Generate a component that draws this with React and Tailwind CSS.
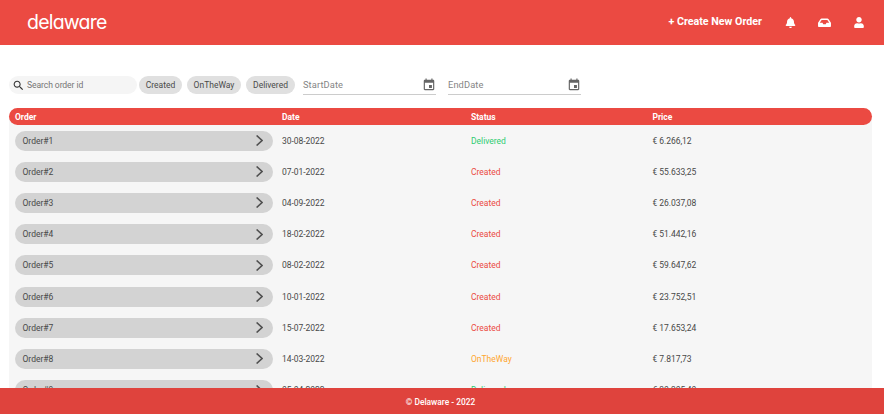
import React from "react";

const orders = [
  ["Order#1", "30-08-2022", "Delivered", "€ 6.266,12"],
  ["Order#2", "07-01-2022", "Created", "€ 55.633,25"],
  ["Order#3", "04-09-2022", "Created", "€ 26.037,08"],
  ["Order#4", "18-02-2022", "Created", "€ 51.442,16"],
  ["Order#5", "08-02-2022", "Created", "€ 59.647,62"],
  ["Order#6", "10-01-2022", "Created", "€ 23.752,51"],
  ["Order#7", "15-07-2022", "Created", "€ 17.653,24"],
  ["Order#8", "14-03-2022", "OnTheWay", "€ 7.817,73"],
  ["Order#9", "05-04-2022", "Delivered", "€ 30.305,40"],
];

const statusColor = {
  Delivered: "text-[#2ecc71]",
  Created: "text-[#eb4a42]",
  OnTheWay: "text-[#ffa630]",
};

function Chip({ children, className }) {
  return (
    <button className={`h-[18px] shrink-0 rounded-full bg-[#e0e0e0] text-center text-[8.5px] leading-[18px] text-[#4a4a4a] ${className}`}>
      {children}
    </button>
  );
}

function DateField({ label }) {
  return (
    <div className="flex h-[20px] w-[133px] items-center justify-between border-b border-[#cccccc] text-[#858585]">
      <span className="pt-px text-[9.3px] tracking-[0.1px]">{label}</span>
      <svg className="size-[14px]" viewBox="0 0 24 24" fill="#666666">
        <path d="M17 12h-5v5h5v-5zM16 1v2H8V1H6v2H5c-1.11 0-1.99.9-1.99 2L3 19c0 1.1.89 2 2 2h14c1.1 0 2-.9 2-2V5c0-1.1-.9-2-2-2h-1V1h-2zm3 18H5V8h14v11z" />
      </svg>
    </div>
  );
}

function Header() {
  return (
    <header className="flex h-[44.5px] shrink-0 items-center bg-[#eb4a42] pl-[27px] pr-[20px] text-white">
      <span className="pt-px font-['Inter',sans-serif] text-[19.5px] leading-none tracking-[-0.8px] [font-feature-settings:'cv11']">
        delaware
      </span>
      <span className="ml-auto text-[10.7px] font-bold">+ Create New Order</span>
      <svg className="ml-[22.5px] h-[11px] w-[11px]" viewBox="0 0 448 512" fill="currentColor">
        <path d="M224 512c35.320 0 63.970-28.650 63.970-64H160.030c0 35.350 28.650 64 63.970 64zm215.390-149.710c-19.320-20.760-55.470-51.990-55.470-154.290 0-77.700-54.480-139.900-127.940-155.160V32c0-17.670-14.320-32-31.980-32s-31.980 14.330-31.980 32v20.840C118.560 68.100 64.080 130.300 64.080 208c0 102.300-36.150 133.530-55.470 154.290-6 6.450-8.660 14.160-8.610 21.710.11 16.400 12.980 32 32.100 32h383.800c19.120 0 32-15.600 32.100-32 .05-7.550-2.610-15.270-8.610-21.710z" />
      </svg>
      <svg className="ml-[22.5px] h-[11.5px] w-[13px]" viewBox="0 0 576 512" fill="currentColor">
        <path d="M567.938 243.908L462.250 85.374A48.003 48.003 0 0 0 422.311 64H153.689a48 48 0 0 0-39.938 21.374L8.062 243.908A47.994 47.994 0 0 0 0 270.533V400c0 26.510 21.490 48 48 48h480c26.510 0 48-21.490 48-48V270.533a47.994 47.994 0 0 0-8.062-26.625zM162.252 128h251.497l85.333 128H376l-32 64H232l-32-64H76.918l85.334-128z" />
      </svg>
      <svg className="ml-[23px] h-[11px] w-[10px]" viewBox="0 0 448 512" fill="currentColor">
        <path d="M224 256c70.700 0 128-57.300 128-128S294.700 0 224 0 96 57.300 96 128s57.300 128 128 128zm89.600 32h-16.700c-22.200 10.200-46.900 16-72.900 16s-50.600-5.800-72.900-16h-16.700C60.200 288 0 348.200 0 422.400V464c0 26.500 21.500 48 48 48h352c26.500 0 48-21.500 48-48v-41.600c0-74.200-60.200-134.400-134.400-134.400z" />
      </svg>
    </header>
  );
}

export default function App() {
  return (
    <div className="flex h-screen flex-col overflow-hidden bg-white font-['Roboto',sans-serif]">
      <Header />
      <main className="min-h-0 flex-1 overflow-hidden pl-[9px] pr-[12px] pt-[28px]">
        <div className="flex h-[25px] items-center">
          <label className="flex h-[18px] w-[128px] items-center rounded-full bg-[#f5f5f5] pl-[3px]">
            <svg className="size-[13px]" viewBox="0 0 24 24" fill="#333333">
              <path d="M15.500 14h-.79l-.28-.27C15.410 12.590 16 11.110 16 9.500 16 5.910 13.090 3 9.500 3S3 5.910 3 9.500 5.910 16 9.500 16c1.610 0 3.090-.59 4.230-1.570l.27.28v.79l5 4.990L20.490 19l-4.990-5zm-6 0C7.010 14 5 11.990 5 9.500S7.010 5 9.500 5 14 7.010 14 9.500 11.990 14 9.500 14z" />
            </svg>
            <span className="ml-[2px] text-[8.6px] leading-[18px] tracking-[-0.1px] text-[#757575]">Search order id</span>
          </label>
          <Chip className="ml-[2px] w-[43px]">Created</Chip>
          <Chip className="ml-[5px] w-[54px]">OnTheWay</Chip>
          <Chip className="ml-[5px] mr-[8px] w-[49px]">Delivered</Chip>
          <DateField label="StartDate" />
          <div className="w-[12px]" />
          <DateField label="EndDate" />
        </div>
        <section className="mt-[10.5px] h-[400px] rounded-t-[9px] bg-[#f6f6f6] text-[8.5px] text-[#484848]">
          <div className="grid h-[17px] grid-cols-[267px_189px_181.500px_1fr] items-center rounded-full bg-[#eb4a42] pl-[6px] pt-px font-bold text-white">
            <span>Order</span>
            <span>Date</span>
            <span>Status</span>
            <span>Price</span>
          </div>
          {orders.map(([id, date, status, price]) => (
            <div key={id} className="grid h-[31.200px] grid-cols-[267px_189px_181.500px_1fr] items-center pl-[6px]">
              <div className="flex h-[20px] w-[258px] items-center justify-between rounded-full bg-[#d3d3d3] pl-[7.500px] pr-[10.500px]">
                <span className="pt-px">{id}</span>
                <svg className="h-[11px] w-[7px]" viewBox="0 0 7 11" fill="none" stroke="#505050" strokeWidth="1.600">
                  <path d="M.6.500 6 5.500.6 10.500" />
                </svg>
              </div>
              <span className="pt-px tracking-[-0.05px]">{date}</span>
              <span className={`pt-px ${statusColor[status]}`}>{status}</span>
              <span className="pt-px tracking-[-0.05px]">{price}</span>
            </div>
          ))}
        </section>
      </main>
      <footer className="flex h-[26px] shrink-0 items-center justify-center bg-[#df433d] pr-[3px] pt-[2px] text-[8.400px] font-medium text-white">
        © Delaware - 2022
      </footer>
    </div>
  );
}
